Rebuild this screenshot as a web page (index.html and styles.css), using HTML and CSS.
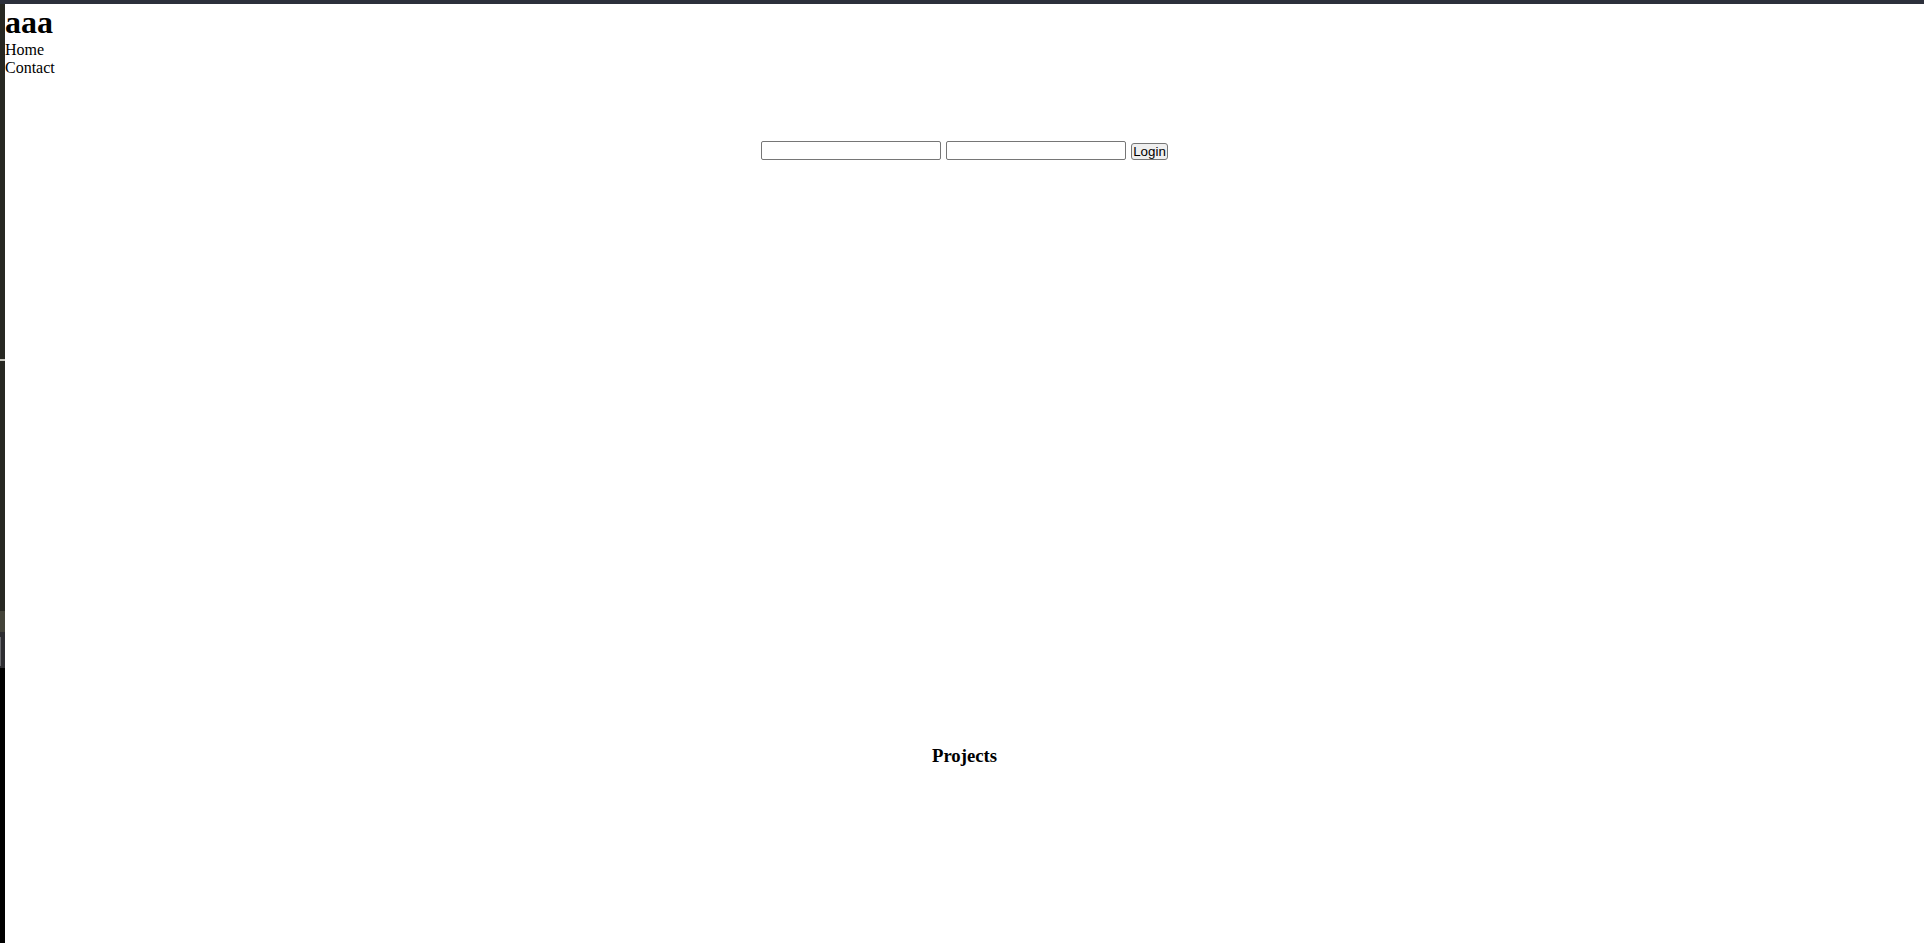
FILE: index.html
```html
<!DOCTYPE html>
<html lang="en">
<head>
<meta charset="utf-8">
<title>aaa</title>
<link rel="stylesheet" href="styles.css">
</head>
<body>
<div class="screen">
  <div class="topbar"></div>
  <div class="main">
    <div class="strip">
      <div class="seg seg-dark1"></div>
      <div class="seg seg-light"></div>
      <div class="seg seg-dark2"></div>
      <div class="seg seg-olive"></div>
      <div class="seg seg-gray"><div class="seg-inner"></div></div>
      <div class="seg seg-black"></div>
    </div>
    <div class="page">
      <header class="site-header">
        <h1 class="site-title">aaa</h1>
        <nav class="site-nav">
          <a class="nav-link" href="#">Home</a>
          <a class="nav-link" href="#">Contact</a>
        </nav>
      </header>
      <form class="login-form" onsubmit="return false;">
        <input class="field" type="text">
        <input class="field" type="password">
        <button class="login-btn" type="submit">Login</button>
      </form>
      <section class="projects">
        <h3 class="projects-title">Projects</h3>
      </section>
    </div>
  </div>
</div>
</body>
</html>
```

FILE: styles.css
```css
html, body {
  margin: 0;
  padding: 0;
  height: 100%;
}

body {
  background: #000;
  font-family: "Liberation Serif", "Times New Roman", serif;
  font-size: 16px;
  color: #000;
}

.screen {
  display: flex;
  flex-direction: column;
  height: 100vh;
}

.topbar {
  height: 4px;
  background: #2c303b;
  flex: none;
}

.main {
  display: flex;
  flex: 1;
  min-height: 0;
}

.strip {
  width: 5px;
  flex: none;
  display: flex;
  flex-direction: column;
}

.seg { flex: none; }
.seg-dark1 { height: 355px; background: #272822; }
.seg-light { height: 2px; background: #c4c4bc; }
.seg-dark2 { height: 250px; background: #272822; }
.seg-olive { height: 21px; background: #434339; }
.seg-gray {
  height: 36px;
  background: #2d2d31;
  display: flex;
  flex-direction: column;
  padding: 5px 0 2px 0;
  box-sizing: border-box;
}
.seg-inner {
  width: 1px;
  flex: 1;
  background: #6a6a6e;
}
.seg-black { flex: 1; background: #000; }

.page {
  flex: 1;
  background: #fff;
  min-width: 0;
}

.site-title {
  margin: 0;
  font-size: 32px;
  font-weight: bold;
}

.site-nav {
  display: flex;
  flex-direction: column;
}

.nav-link {
  color: #000;
  text-decoration: none;
  line-height: 18.4px;
}

.login-form {
  display: flex;
  justify-content: center;
  align-items: flex-start;
  gap: 5px;
  margin-top: 63px;
}

.field {
  box-sizing: border-box;
  width: 180px;
  height: 19px;
  margin: 0;
  padding: 1px 2px;
  border: 1px solid #767676;
  border-radius: 2px;
  background: #fff;
  font-family: "Liberation Sans", Arial, sans-serif;
  font-size: 13.33px;
}

.login-btn {
  box-sizing: border-box;
  height: 17px;
  margin: 2px 0 0 0;
  padding: 0 1px;
  border: 1px solid #767676;
  border-radius: 3px;
  background: #efefef;
  color: #000;
  font-family: "Liberation Sans", Arial, sans-serif;
  font-size: 13.33px;
  line-height: 15px;
}

.projects {
  margin-top: 585px;
}

.projects-title {
  margin: 0;
  text-align: center;
  font-size: 18.72px;
  font-weight: bold;
}
```
